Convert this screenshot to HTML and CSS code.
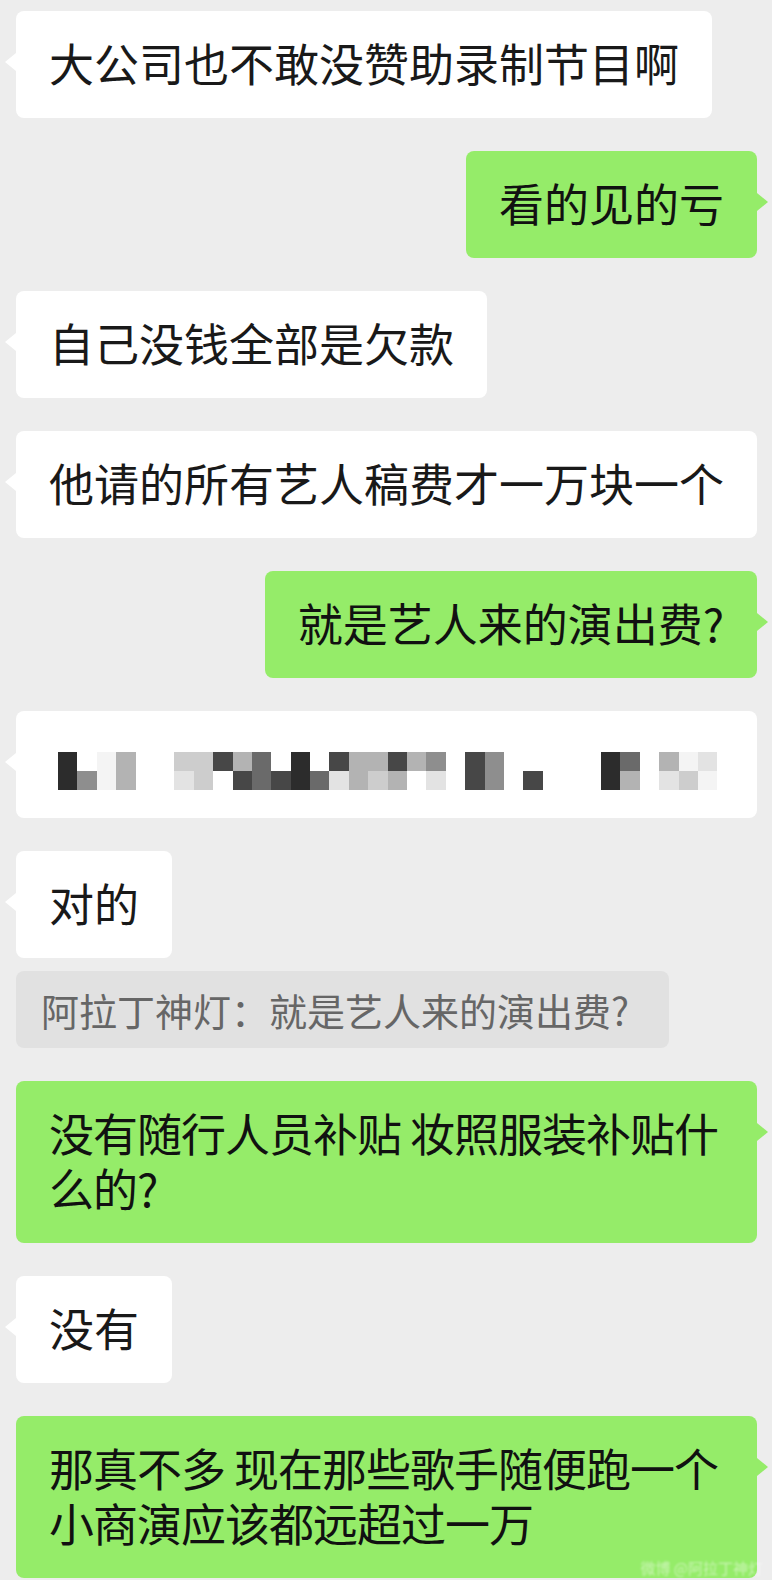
FILE: index.html
```html
<!DOCTYPE html>
<html lang="zh-CN">
<head>
  <meta charset="UTF-8">
  <title>聊天记录</title>
  <link rel="stylesheet" href="styles.css">
</head>
<body>
  <!-- 聊天记录 -->
  <div class="chat">
    <div class="row left">
      <div class="bubble">大公司也不敢没赞助录制节目啊</div>
    </div>
    <div class="row right">
      <div class="bubble green">看的见的亏</div>
    </div>
    <div class="row left">
      <div class="bubble">自己没钱全部是欠款</div>
    </div>
    <div class="row left">
      <div class="bubble">他请的所有艺人稿费才一万块一个</div>
    </div>
    <div class="row right">
      <div class="bubble green">就是艺人来的演出费?</div>
    </div>

    <!-- 打码的消息 -->
    <div class="row left">
      <div class="bubble mosaic">
        <div class="pixels">
          <i class="k1"></i><i class="k1"></i>
          <i class="k0"></i><i class="k4"></i>
          <i class="k8"></i><i class="k8"></i>
          <i class="k5"></i><i class="k5"></i>
          <i class="k0"></i><i class="k0"></i>
          <i class="k0"></i><i class="k0"></i>
          <i class="k6"></i><i class="k7"></i>
          <i class="k6"></i><i class="k6"></i>
          <i class="k2"></i><i class="k0"></i>
          <i class="k5"></i><i class="k2"></i>
          <i class="k3"></i><i class="k3"></i>
          <i class="k0"></i><i class="k2"></i>
          <i class="k1"></i><i class="k1"></i>
          <i class="k0"></i><i class="k3"></i>
          <i class="k2"></i><i class="k7"></i>
          <i class="k5"></i><i class="k5"></i>
          <i class="k5"></i><i class="k6"></i>
          <i class="k2"></i><i class="k5"></i>
          <i class="k5"></i><i class="k0"></i>
          <i class="k4"></i><i class="k7"></i>
          <i class="k0"></i><i class="k0"></i>
          <i class="k2"></i><i class="k2"></i>
          <i class="k4"></i><i class="k4"></i>
          <i class="k0"></i><i class="k0"></i>
          <i class="k0"></i><i class="k2"></i>
          <i class="k0"></i><i class="k0"></i>
          <i class="k0"></i><i class="k0"></i>
          <i class="k0"></i><i class="k0"></i>
          <i class="k1"></i><i class="k1"></i>
          <i class="k3"></i><i class="k5"></i>
          <i class="k0"></i><i class="k0"></i>
          <i class="k5"></i><i class="k7"></i>
          <i class="k8"></i><i class="k6"></i>
          <i class="k7"></i><i class="k8"></i>
        </div>
      </div>
    </div>

    <div class="row left quoted">
      <div class="bubble">对的</div>
      <div class="quote">阿拉丁神灯：就是艺人来的演出费?</div>
    </div>
    <div class="row right">
      <div class="bubble green wide">没有随行人员补贴 妆照服装补贴什么的?</div>
    </div>
    <div class="row left">
      <div class="bubble">没有</div>
    </div>
    <div class="row right">
      <div class="bubble green wide">
        <span>那真不多 现在那些歌手随便跑一个小商演应该都远超过一万</span>
        <span class="watermark">微博 @阿拉丁神灯</span>
      </div>
    </div>
  </div>
</body>
</html>
```

FILE: styles.css
```css
/* Global */
body {
  margin: 0;
  padding: 0;
  background-color: #ededed;
  font-family: "Noto Sans CJK SC", "Noto Sans", sans-serif;
  color: #191919;
}

/* Chat list */
.chat {
  display: flex;
  flex-direction: column;
  gap: 33px;
  padding: 11px 15px 0 16px;
}
.row {
  display: flex;
  flex-direction: column;
}
.row.left {
  align-items: flex-start;
}
.row.right {
  align-items: flex-end;
}
.row.quoted {
  gap: 13px;
}

/* Bubbles */
.bubble {
  position: relative;
  box-sizing: border-box;
  max-width: 741px;
  padding: 24px 33px 28px;
  font-size: 45px;
  line-height: 55px;
  background-color: #fff;
  border-radius: 8px;
}
.bubble::before {
  content: "";
  position: absolute;
  top: 42px;
  left: -11px;
  border-style: solid;
  border-width: 9px 11px 9px 0;
  border-color: transparent #fff transparent transparent;
}
.bubble.green {
  background-color: #95ec69;
  color: #111;
}
.bubble.green::before {
  left: auto;
  right: -11px;
  border-width: 9px 0 9px 11px;
  border-color: transparent transparent transparent #95ec69;
}
.bubble.wide {
  letter-spacing: -1px;
}

/* Pixelated message */
.bubble.mosaic {
  width: 743px;
  height: 107px;
  padding: 41px 0 0 42px;
}
.pixels {
  display: grid;
  grid-auto-flow: column;
  grid-template-rows: repeat(2, 19px);
  grid-auto-columns: 19.4px;
  filter: blur(0.4px);
}
.pixels i { display: block; }
.k0 { background-color: transparent; }
.k1 { background-color: #2c2c2c; }
.k2 { background-color: #474747; }
.k3 { background-color: #6a6a6a; }
.k4 { background-color: #8e8e8e; }
.k5 { background-color: #b3b3b3; }
.k6 { background-color: #cdcdcd; }
.k7 { background-color: #e3e3e3; }
.k8 { background-color: #f4f4f4; }

/* Quoted reply */
.quote {
  padding: 16px 40px 16px 25px;
  font-size: 38px;
  line-height: 45px;
  color: #666;
  background-color: #e1e1e1;
  border-radius: 8px;
}

/* Watermark */
.watermark {
  position: absolute;
  right: -6px;
  bottom: 1px;
  font-size: 15px;
  line-height: 18px;
  letter-spacing: 0;
  color: rgba(255, 255, 255, 0.5);
  filter: blur(1.2px);
}
```
